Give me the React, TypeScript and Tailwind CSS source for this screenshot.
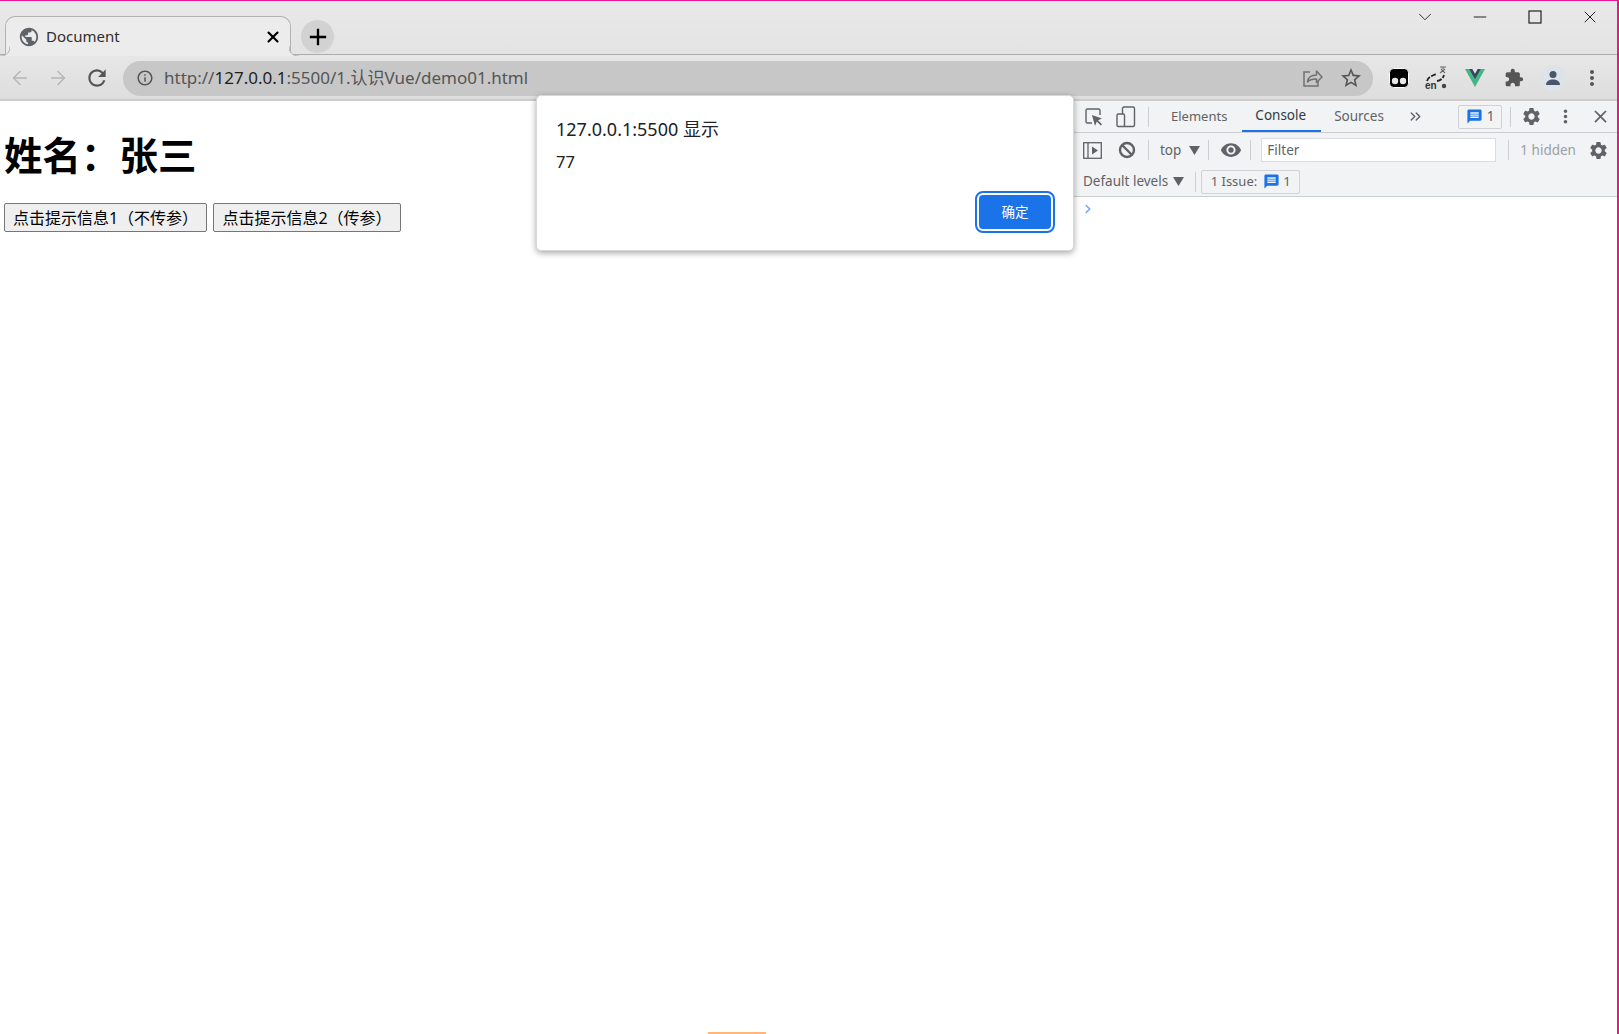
import React from 'react';
import { ArrowLeft, ArrowRight, ChevronDown, ChevronRight, ChevronsRight, Minus, X } from 'lucide-react';
import { MdAdd, MdClose, MdExtension, MdInfoOutline, MdMessage, MdMoreVert, MdPublic, MdRefresh, MdSettings, MdStarBorder, MdVisibility } from 'react-icons/md';

const ui = 'font-["Noto_Sans","Noto_Sans_CJK_SC",sans-serif]';

const Sep = ({ className = '' }: { className?: string }) => <div className={`w-px h-[20px] bg-[#ccced2] shrink-0 ${className}`} />;

const Tri = ({ className = '' }: { className?: string }) => (
    <svg width="11" height="9" viewBox="0 0 11 9" className={className}><path d="M0 0h11L5.5 9z" fill="#5f6368" /></svg>
);

const ShareIcon = () => (
    <svg width="22" height="22" viewBox="0 0 22 22" fill="none" stroke="#6f7175" strokeWidth="1.5">
        <path d="M9 5H3v14h14v-5" />
        <path d="M6.5 15c.5-4.500 4-7 9-7V4l5.500 6-5.500 5.500V12c-4 0-7 .6-9 3z" strokeLinejoin="round" />
    </svg>
);

const TamperIcon = () => (
    <svg width="20" height="20" viewBox="0 0 20 20">
        <rect x="0.500" y="0.500" width="19" height="19" rx="4" fill="#000" stroke="#fff" />
        <circle cx="6" cy="13" r="3.200" fill="#e8e8e8" />
        <circle cx="14" cy="13" r="3.200" fill="#e8e8e8" />
    </svg>
);

const TranslateIcon = () => (
    <svg width="24" height="24" viewBox="0 0 24 24">
        <path d="M2 15c1-4 5-5 9-7M12 15c4-.5 6-3 7-6" fill="none" stroke="#222" strokeWidth="1.800" strokeDasharray="5 1.500" />
        <path d="M15 1h6M18 1v2M15 7l5-4M16 3l4 4" fill="none" stroke="#666" strokeWidth="1.100" />
        <text x="0" y="23" fontSize="10" fontWeight="700" fontFamily="Liberation Sans" fill="#333">en</text>
        <circle cx="19" cy="20" r="2.200" fill="#444" />
    </svg>
);

const VueIcon = () => (
    <svg width="20" height="18" viewBox="0 0 20 18">
        <path d="M0 0h4l6 10.500L16 0h4L10 18z" fill="#41b883" />
        <path d="M4 0h3.300L10 4.800 12.700 0H16l-6 10.500z" fill="#35495e" />
    </svg>
);

const Avatar = () => (
    <div className="w-[26px] h-[26px] rounded-full bg-[#dee3ea] flex items-center justify-center">
        <svg width="18" height="18" viewBox="0 0 18 18" fill="#47566f">
            <circle cx="9" cy="5.500" r="3.500" />
            <path d="M2 16c0-4 3.500-5.500 7-5.500s7 1.500 7 5.500z" />
        </svg>
    </div>
);

const InspectIcon = () => (
    <svg width="20" height="20" viewBox="0 0 20 20" fill="none">
        <path d="M8 16H3.500A1.500 1.500 0 0 1 2 14.500v-11A1.500 1.500 0 0 1 3.500 2h11A1.500 1.500 0 0 1 16 3.500V8" stroke="#5f6368" strokeWidth="1.400" />
        <path d="M8 8l10 3.500-4 1.700 4 4-1.200 1.300-4-4L11 19z" fill="#5f6368" />
    </svg>
);

const DeviceIcon = () => (
    <svg width="20" height="22" viewBox="0 0 20 22" fill="none" stroke="#5f6368" strokeWidth="1.400">
        <rect x="6.500" y="1" width="12" height="19.500" rx="1.500" />
        <rect x="1" y="8" width="7.500" height="12.500" rx="1.200" fill="#f1f3f4" />
    </svg>
);

const SidebarIcon = () => (
    <svg width="19" height="17" viewBox="0 0 19 17">
        <rect x="0.700" y="0.700" width="17.600" height="15.600" fill="none" stroke="#5f6368" strokeWidth="1.300" />
        <path d="M5 1v15" stroke="#5f6368" strokeWidth="1.300" />
        <path d="M9 4.500l6 4-6 4z" fill="#5f6368" />
    </svg>
);

const BlockIcon = ({ className = '' }: { className?: string }) => (
    <svg width="18" height="18" viewBox="0 0 18 18" fill="none" stroke="#5f6368" strokeWidth="2.400" className={className}>
        <circle cx="9" cy="9" r="7" />
        <path d="M4 4l10 10" />
    </svg>
);

const MaxIcon = ({ className = '' }: { className?: string }) => (
    <svg width="16" height="16" viewBox="0 0 16 16" fill="none" stroke="#222" strokeWidth="1.200" className={className}>
        <rect x="2" y="2" width="12" height="12" />
    </svg>
);

const TabFoot = ({ className = '', flip = false }: { className?: string; flip?: boolean }) => (
    <svg width="10" height="10" viewBox="0 0 10 10" fill="none" className={className}>
        <path d={flip ? 'M0 0c0 6 3 10 10 10H0z' : 'M10 0c0 6-3 10-10 10h10z'} fill="#ececec" />
        <path d={flip ? 'M0 0c0 6 3 10 10 10' : 'M10 0c0 6-3 10-10 10'} stroke="#b2b2b2" />
    </svg>
);

function ChromeBar() {
    return (
        <>
            <div className="h-[54px] flex bg-gradient-to-b from-[#e9e9e9] to-[#e3e3e3] border-b border-[#adadad] shrink-0">
                <div className="w-[5px]" />
                <div className="w-[286px] h-[40px] mt-[15px] rounded-t-[10px] border border-b-0 border-[#b2b2b2] bg-[#ececec] flex items-center pl-[12px] pr-[8px] relative z-10">
                    <TabFoot className="absolute -left-[6px] bottom-0" />
                    <TabFoot flip className="absolute -right-[9px] bottom-0" />
                    <MdPublic size={22} className="text-[#5f6368] shrink-0" />
                    <span className={`${ui} text-[15px] text-[#2e2e2e] ml-[6px] flex-1`}>Document</span>
                    <X size={18} strokeWidth={2.800} className="text-black" />
                </div>
                <div className="w-[33px] h-[33px] rounded-full bg-[#d2d2d2] ml-[10px] mt-[19px] flex items-center justify-center">
                    <MdAdd size={28} className="text-black" />
                </div>
                <div className="flex-1" />
                <div className="flex h-[34px] items-center text-[#222] -mt-px">
                    <ChevronDown size={22} strokeWidth={1} className="mr-[34px]" />
                    <Minus size={20} strokeWidth={1.200} className="mr-[37px]" />
                    <MaxIcon className="mr-[37px]" />
                    <X size={20} strokeWidth={1.200} className="mr-[17px]" />
                </div>
            </div>
            <div className="h-[46px] flex items-center bg-gradient-to-b from-[#e7e7e7] to-[#dedede] border-b-2 border-[#cccccc] shrink-0 pt-[2px]">
                <div className="w-[123px] flex items-center pl-[9px] gap-[16px]">
                    <ArrowLeft size={22} strokeWidth={1.500} className="text-[#b5b5b5]" />
                    <ArrowRight size={22} strokeWidth={1.500} className="text-[#b5b5b5]" />
                    <MdRefresh size={26} className="text-[#555] -ml-[1px]" />
                </div>
                <div className="w-[1250px] h-[35px] rounded-full bg-[#c7c7c7] flex items-center pl-[13px] pr-[10px]">
                    <MdInfoOutline size={18} className="text-[#555]" />
                    <span className={`${ui} text-[17px] ml-[10px] text-[#555] flex-1`}>
                        http://<span className="text-[#1f1f1f]">127.0.0.1</span>:5500/1.认识Vue/demo01.html
                    </span>
                    <ShareIcon />
                    <MdStarBorder size={24} className="text-[#555] ml-[16px]" />
                </div>
                <div className="flex items-center ml-[16px]">
                    <div className="w-[20px] flex justify-center"><TamperIcon /></div>
                    <div className="w-[24px] flex justify-center ml-[16px]"><TranslateIcon /></div>
                    <div className="w-[20px] flex justify-center ml-[16px]"><VueIcon /></div>
                    <div className="w-[20px] flex justify-center ml-[19px]"><MdExtension size={22} className="text-[#555]" /></div>
                    <div className="ml-[16px]"><Avatar /></div>
                    <MdMoreVert size={24} className="text-[#555] ml-[14px]" />
                </div>
            </div>
        </>
    );
}

function DevTools() {
    return (
        <div className={`${ui} w-[545px] shrink-0 flex flex-col text-[#5f6368] text-[13.500px]`}>
            <div className="h-[32px] flex items-center bg-[#f1f3f4] border-b border-[#cbcdd1] shrink-0">
                <div className="w-[76px] flex items-center pl-[12px] gap-[12px]">
                    <InspectIcon />
                    <DeviceIcon />
                </div>
                <Sep />
                <div className="flex items-stretch h-full ml-[22px]">
                    <span className="flex items-center text-[13px]">Elements</span>
                    <span className="flex items-center ml-[15px] pl-[13px] pr-[15px] text-[#303942] border-b-2 border-[#1a73e8]">Console</span>
                    <span className="flex items-center ml-[13px]">Sources</span>
                </div>
                <ChevronsRight size={17} className="ml-[23px] text-[#5f6368]" />
                <div className="flex-1" />
                <div className="h-[24px] w-[44px] flex items-center justify-center gap-[4px] border border-[#d0d2d6] rounded-[2px]">
                    <MdMessage size={17} className="text-[#1a73e8]" />
                    <span>1</span>
                </div>
                <Sep className="ml-[8px]" />
                <MdSettings size={21} className="ml-[10px]" />
                <MdMoreVert size={21} className="ml-[13px]" />
                <MdClose size={21} className="ml-[14px] mr-[6px]" />
            </div>
            <div className="h-[34px] flex items-center bg-[#f1f3f4] shrink-0">
                <div className="ml-[11px]"><SidebarIcon /></div>
                <BlockIcon className="ml-[16px]" />
                <Sep className="ml-[12px]" />
                <span className="ml-[11px]">top</span>
                <Tri className="ml-[8px]" />
                <Sep className="ml-[8px]" />
                <MdVisibility size={22} className="ml-[11px]" />
                <Sep className="ml-[8px]" />
                <div className="w-[235px] h-[24px] ml-[10px] bg-white border border-[#dadce0] flex items-center pl-[5px] text-[#5f6368]">Filter</div>
                <Sep className="ml-[12px]" />
                <span className="ml-[11px] text-[#9aa0a6]">1 hidden</span>
                <MdSettings size={21} className="ml-[12px]" />
            </div>
            <div className="h-[30px] flex items-center bg-[#f1f3f4] border-b border-[#cbcdd1] shrink-0">
                <span className="ml-[11px]">Default levels</span>
                <Tri className="ml-[5px]" />
                <Sep className="ml-[11px]" />
                <div className="h-[24px] w-[99px] ml-[5px] flex items-center justify-center gap-[6px] border border-[#d0d2d6] rounded-[2px] text-[13px]">
                    <span>1 Issue:</span>
                    <span className="flex items-center gap-[3px]"><MdMessage size={17} className="text-[#1a73e8]" />1</span>
                </div>
            </div>
            <div className="flex-1 bg-white pl-[9px] pt-[5px]">
                <ChevronRight size={14} strokeWidth={2.800} className="text-[#7aa7f5]" />
            </div>
        </div>
    );
}

export default function App() {
    return (
        <div className={`${ui} relative w-[1619px] h-[1034px] overflow-hidden bg-white flex flex-col border-t border-[#e8178f] border-r-2 border-r-[#e8178f]`}>
            <ChromeBar />
            <div className="flex-1 flex min-h-0">
                <div className="flex-1 pl-[4px]">
                    <h1 className='font-["Noto_Sans_CJK_SC",sans-serif] font-bold text-[38.500px] leading-[54px] text-black mt-[25px] mb-[23px]'>{'姓名\uFF1A张三'}</h1>
                    <div className="flex gap-[6px]">
                        <button className="h-[29px] w-[203px] bg-[#efefef] border border-[#767676] rounded-[2px] text-[16px] text-black">{'点击提示信息1\uFF08不传参\uFF09'}</button>
                        <button className="h-[29px] w-[188px] bg-[#efefef] border border-[#767676] rounded-[2px] text-[16px] text-black">{'点击提示信息2\uFF08传参\uFF09'}</button>
                    </div>
                </div>
                <DevTools />
            </div>
            <div className="absolute left-[536px] top-[94px] w-[538px] h-[156px] bg-white rounded-[5px] border border-[#d8d8d8] shadow-[0_2px_6px_rgba(0,0,0,0.35)] pl-[19px] pr-[20px] pt-[20px] flex flex-col">
                <div className="text-[18px] leading-[26px] text-[#202124]">127.0.0.1:5500 显示</div>
                <div className="text-[16.500px] leading-[24px] mt-[8px] text-[#202124]">77</div>
                <div className="flex justify-end mt-[19px]">
                    <button className="w-[76px] h-[38px] rounded-[6px] bg-[#1a73e8] border-2 border-white outline-2 outline-[#1a73e8] text-white text-[13.500px]">确定</button>
                </div>
            </div>
            <div className="absolute left-[708px] bottom-0 w-[58px] h-[2px] bg-[#ffb77a]" />
        </div>
    );
}
